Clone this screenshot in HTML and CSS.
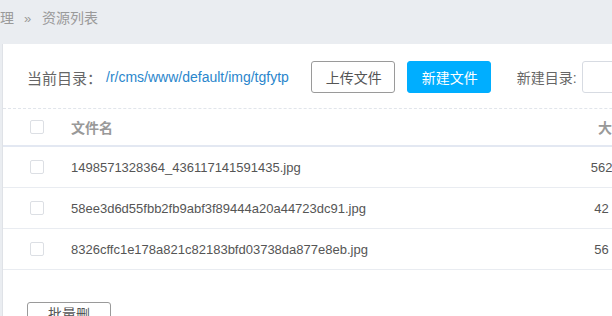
FILE: index.html
```html
<!DOCTYPE html>
<html lang="zh-CN">
<head>
    <meta charset="UTF-8">
    <meta name="viewport" content="width=device-width, initial-scale=1.0">
    <title>资源列表</title>
    <link rel="stylesheet" href="styles.css">
</head>
<body>
    <div class="crumbs">理 <span class="sep">»</span> 资源列表</div>

    <div class="panel">
        <div class="toolbar">
            <span class="label">当前目录：</span>
            <a class="path" href="#">/r/cms/www/default/img/tgfytp</a>
            <button class="btn btn-line">上传文件</button>
            <button class="btn btn-blue">新建文件</button>
            <span class="dir-label">新建目录:</span>
            <input class="dir-input" type="text">
        </div>

        <div class="table">
            <div class="row head">
                <div class="cell check"><span class="box"></span></div>
                <div class="cell">文件名</div>
                <div class="cell size">大小</div>
                <div class="cell"></div>
            </div>
            <div class="row">
                <div class="cell check"><span class="box"></span></div>
                <div class="cell">1498571328364_436117141591435.jpg</div>
                <div class="cell size">562 KB</div>
                <div class="cell"></div>
            </div>
            <div class="row">
                <div class="cell check"><span class="box"></span></div>
                <div class="cell">58ee3d6d55fbb2fb9abf3f89444a20a44723dc91.jpg</div>
                <div class="cell size">42 KB</div>
                <div class="cell"></div>
            </div>
            <div class="row">
                <div class="cell check"><span class="box"></span></div>
                <div class="cell">8326cffc1e178a821c82183bfd03738da877e8eb.jpg</div>
                <div class="cell size">56 KB</div>
                <div class="cell"></div>
            </div>
        </div>

        <div class="footer">
            <button class="btn btn-line">批量删除</button>
        </div>
    </div>
</body>
</html>
```

FILE: styles.css
```css
html, body {
    margin: 0;
    padding: 0;
}
body {
    width: 612px;
    height: 316px;
    overflow: hidden;
    background-color: #eaedf1;
    font-family: "Liberation Sans", "Noto Sans CJK SC", sans-serif;
    color: #555;
}
.crumbs {
    height: 44px;
    line-height: 36px;
    font-size: 14px;
    color: #9a9a9a;
    white-space: nowrap;
}
.crumbs .sep {
    margin: 0 7px 0 6px;
    font-size: 13px;
}
.panel {
    width: 900px;
    margin-left: 2px;
    border-left: 1px solid #dfe2e7;
    background-color: #fff;
    padding-top: 17px;
}
.toolbar {
    display: flex;
    align-items: center;
    height: 32px;
    padding: 0 0 15px 24px;
    border-bottom: 1px dashed #e1e5eb;
    white-space: nowrap;
}
.label {
    font-size: 15px;
    color: #666;
}
.path {
    margin-left: 4px;
    font-size: 14px;
    color: #2a86cc;
    text-decoration: none;
}
.btn {
    height: 32px;
    padding: 0 14px;
    font-family: inherit;
    font-size: 14px;
    border-radius: 3px;
    cursor: pointer;
}
.btn-line {
    width: 84px;
    background-color: #fff;
    border: 1px solid #9a9a9a;
    color: #555;
}
.btn-blue {
    width: 84px;
    background-color: #00aeff;
    border: 1px solid #00aeff;
    color: #fff;
}
.toolbar .btn-line {
    margin-left: 22px;
}
.toolbar .btn-blue {
    margin-left: 12px;
}
.dir-label {
    margin-left: 26px;
    font-size: 14px;
    color: #666;
}
.dir-input {
    width: 120px;
    height: 30px;
    margin-left: 5px;
    padding: 0;
    border: 1px solid #d7dbe2;
    border-radius: 3px;
}
.table {
    font-size: 13px;
}
.row {
    display: grid;
    grid-template-columns: 68px 481px 120px 1fr;
    align-items: center;
    height: 40px;
    border-bottom: 1px solid #e9ecf1;
}
.row.head {
    height: 36px;
    border-bottom: 2px solid #e3e8f2;
    font-size: 14px;
    font-weight: bold;
    color: #999;
}
.cell {
    white-space: nowrap;
}
.check {
    display: flex;
    padding-left: 27px;
}
.box {
    width: 12px;
    height: 12px;
    border: 1px solid #dcdfe4;
    border-radius: 2px;
    background-color: #fff;
}
.size {
    text-align: center;
}
.footer {
    padding: 32px 0 0 24px;
    height: 60px;
}
```
